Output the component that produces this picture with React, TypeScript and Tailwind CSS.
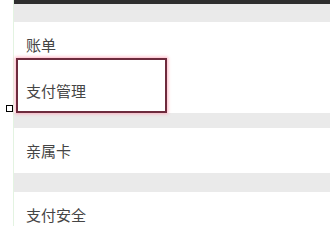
import React from "react";

const font = { fontFamily: '"Noto Sans CJK SC", "Noto Sans", sans-serif' };

function Row({ label, h }: { label: string; h: string }) {
  return (
    <div className={`${h} shrink-0 bg-white flex items-center pl-[12px]`}>
      <span className="text-[15px] leading-none text-[#454545]" style={font}>{label}</span>
    </div>
  );
}

export default function App() {
  return (
    <div className="relative w-[330px] h-[226px] overflow-hidden bg-white flex">
      <div className="w-[13px] shrink-0 bg-white" />
      <div className="flex-1 flex flex-col border-l border-[#e3f3e1]">
        <div className="h-[4px] shrink-0 bg-[#2e2e2e]" />
        <div className="h-[18px] shrink-0 bg-[#eaeaea]" />
        <Row label="账单" h="h-[44px]" />
        <div className="h-[47px] shrink-0 bg-white flex items-end pl-[12px] pb-[15px]">
          <span className="text-[15px] leading-none text-[#454545]" style={font}>支付管理</span>
        </div>
        <div className="h-[15px] shrink-0 bg-[#eaeaea]" />
        <Row label="亲属卡" h="h-[45px]" />
        <div className="h-[19px] shrink-0 bg-[#eaeaea]" />
        <Row label="支付安全" h="h-[44px]" />
      </div>
      <div className="absolute left-[16px] top-[58px] w-[151px] h-[55px] border-2 border-[#6e2b3d] shadow-[0_0_3px_1px_rgba(255,160,180,0.8)]" />
      <div className="absolute left-[6px] top-[105px] w-[7px] h-[7px] border border-black bg-white" />
    </div>
  );
}
